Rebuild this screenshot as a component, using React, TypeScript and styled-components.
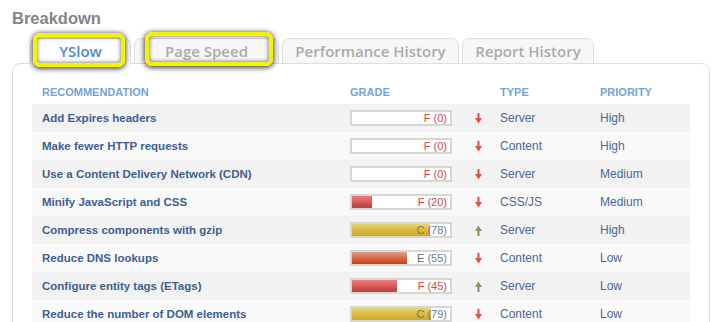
import React from "react";
import styled, { createGlobalStyle } from "styled-components";

const Global = createGlobalStyle`
  html, body { margin: 0; padding: 0; background: #fff; overflow: hidden; }
  body { font-family: "Liberation Sans", Arial, sans-serif; }
`;

const Page = styled.div`
  position: relative;
  padding: 8px 15px 0 12px;
`;

const Title = styled.h2`
  margin: 0;
  font-size: 16.5px;
  line-height: 20px;
  font-weight: bold;
  color: #858585;
`;

const TabStrip = styled.div`
  display: flex;
  gap: 3px;
  margin: 10px 0 -1px 18px;
  position: relative;
  z-index: 1;
`;

const Tab = styled.div<{ $active?: boolean; $w: number }>`
  box-sizing: border-box;
  width: ${(p) => p.$w}px;
  height: 26px;
  display: flex;
  align-items: center;
  justify-content: center;
  border: 1px solid #dedede;
  border-bottom: ${(p) => (p.$active ? "1px solid #fff" : "1px solid #dedede")};
  border-radius: 7px 7px 0 0;
  background: ${(p) => (p.$active ? "#fff" : "#f7f7f7")};
  color: ${(p) => (p.$active ? "#4d8ac9" : "#ababab")};
  font-family: "Open Sans", "Noto Sans", sans-serif;
  font-weight: 600;
  font-size: 15px;
  white-space: nowrap;
`;

const Highlight = styled.div<{ $x: number; $y: number; $w: number; $h: number }>`
  position: absolute;
  left: ${(p) => p.$x}px;
  top: ${(p) => p.$y}px;
  width: ${(p) => p.$w}px;
  height: ${(p) => p.$h}px;
  box-sizing: border-box;
  border: 4px solid #f3f300;
  border-radius: 7px;
  box-shadow: 0 1px 5px 1px rgba(0, 0, 0, 0.7), inset 0 0 4px rgba(0, 0, 0, 0.65);
  z-index: 2;
`;

const Panel = styled.div`
  border: 1px solid #dedede;
  border-radius: 8px;
  background: #fff;
  padding: 16px 19px 20px 19px;
  height: 400px;
`;

const Row = styled.div<{ $bg?: string }>`
  display: grid;
  grid-template-columns: 308px 120px 30px 100px 1fr;
  align-items: center;
  height: 28px;
  padding-left: 10px;
  background: ${(p) => p.$bg || "transparent"};
`;

const HeadRow = styled(Row)`
  height: 24px;
`;

const Head = styled.div`
  font-size: 11px;
  font-weight: bold;
  color: #74a3d9;
  text-transform: uppercase;
`;

const Rec = styled.div`
  font-size: 11.5px;
  font-weight: bold;
  color: #40608f;
`;

const Cell = styled.div`
  font-size: 12px;
  color: #4a6896;
`;

const Bar = styled.div`
  position: relative;
  box-sizing: border-box;
  width: 102px;
  height: 16px;
  border: 2px solid #d6d6d6;
  background: #fff;
`;

const fills: Record<string, string> = {
  F: "linear-gradient(#f07a7a, #e06262 40%, #c84c4c 70%, #b84444)",
  C: "linear-gradient(#ead37a, #dcbd40 45%, #cfa826)",
  E: "linear-gradient(#e0a08c, #d86a4a 50%, #cc4210)",
};

const Fill = styled.div<{ $g: string }>`
  height: 100%;
  background: ${(p) => fills[p.$g]};
`;

const Label = styled.div`
  position: absolute;
  right: 3px;
  top: 0;
  bottom: 0;
  display: flex;
  align-items: center;
  gap: 3px;
  font-size: 11px;
`;

const Letter = styled.span<{ $c: string }>`
  color: ${(p) => p.$c};
`;

const ArrowBox = styled.div`
  display: flex;
  align-items: center;
  padding-left: 5px;
`;

const Arrow = ({ up }: { up: boolean }) => (
  <svg width="7" height="11" viewBox="0 0 7 11" style={{ transform: up ? "rotate(180deg)" : undefined }}>
    <rect x="2.5" y="0" width="2" height="6" fill={up ? "#7d9a5c" : "#e2533c"} />
    <polygon points="0,5 7,5 3.5,10.5" fill={up ? "#7d9a5c" : "#e2533c"} />
  </svg>
);

type R = { rec: string; g: string; s: number; up: boolean; type: string; pri: string };

const rows: R[] = [
  { rec: "Add Expires headers", g: "F", s: 0, up: false, type: "Server", pri: "High" },
  { rec: "Make fewer HTTP requests", g: "F", s: 0, up: false, type: "Content", pri: "High" },
  { rec: "Use a Content Delivery Network (CDN)", g: "F", s: 0, up: false, type: "Server", pri: "Medium" },
  { rec: "Minify JavaScript and CSS", g: "F", s: 20, up: false, type: "CSS/JS", pri: "Medium" },
  { rec: "Compress components with gzip", g: "C", s: 78, up: true, type: "Server", pri: "High" },
  { rec: "Reduce DNS lookups", g: "E", s: 55, up: false, type: "Content", pri: "Low" },
  { rec: "Configure entity tags (ETags)", g: "F", s: 45, up: true, type: "Server", pri: "Low" },
  { rec: "Reduce the number of DOM elements", g: "C", s: 79, up: false, type: "Content", pri: "Low" },
];

const letterColor: Record<string, string> = { F: "#e43b3b", C: "#7e7450", E: "#666" };
const scoreColor: Record<string, string> = { F: "#d04848", C: "#6b7a92", E: "#6b7a92" };

export default function App() {
  return (
    <Page>
      <Global />
      <Title>Breakdown</Title>
      <TabStrip>
        <Tab $active $w={101}>YSlow</Tab>
        <Tab $w={145}>Page Speed</Tab>
        <Tab $w={177}>Performance History</Tab>
        <Tab $w={132}>Report History</Tab>
      </TabStrip>
      <Highlight $x={33} $y={33} $w={92} $h={34} />
      <Highlight $x={145} $y={32} $w={128} $h={34} />
      <Panel>
        <HeadRow>
          <Head>Recommendation</Head>
          <Head>Grade</Head>
          <div />
          <Head>Type</Head>
          <Head>Priority</Head>
        </HeadRow>
        {rows.map((r, i) => (
          <Row key={i} $bg={i % 2 === 0 ? "#f2f2f2" : "#f9f9f9"}>
            <Rec>{r.rec}</Rec>
            <Bar>
              <Fill $g={r.g} style={{ width: `${r.s}px` }} />
              <Label>
                <Letter $c={letterColor[r.g]}>{r.g}</Letter>
                <Letter $c={scoreColor[r.g]}>({r.s})</Letter>
              </Label>
            </Bar>
            <ArrowBox>
              <Arrow up={r.up} />
            </ArrowBox>
            <Cell>{r.type}</Cell>
            <Cell>{r.pri}</Cell>
          </Row>
        ))}
      </Panel>
    </Page>
  );
}
